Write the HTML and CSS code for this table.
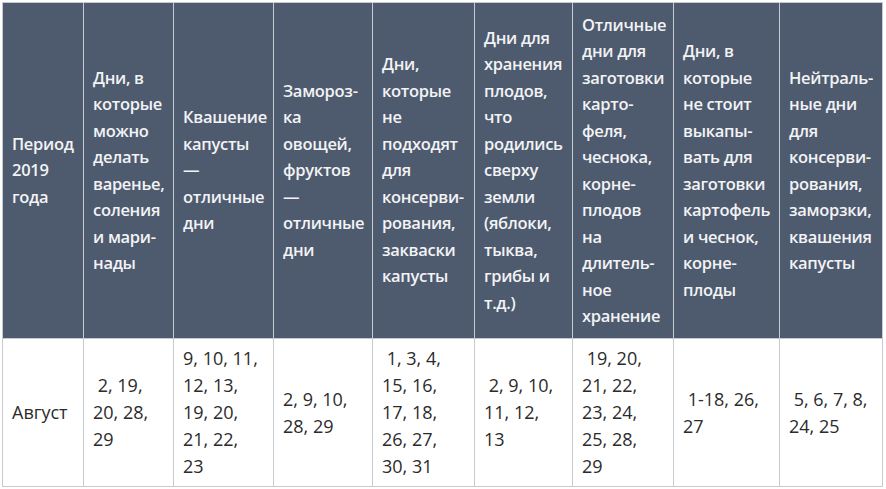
FILE: index.html
```html
<!DOCTYPE html>
<html lang="ru">
<head>
<meta charset="utf-8">
<link rel="stylesheet" href="styles.css">
</head>
<body>
<table class="cal">
  <colgroup>
    <col class="c1"><col class="c2"><col class="c3"><col class="c4"><col class="c5"><col class="c6"><col class="c7"><col class="c8"><col class="c9">
  </colgroup>
  <thead>
    <tr class="head">
      <th>Период<br>2019<br>года</th>
      <th>Дни, в<br>которые<br>можно<br>делать<br>варенье,<br>соления<br>и мари-<br>нады</th>
      <th>Квашение<br>капусты<br>—<br>отличные<br>дни</th>
      <th>Замороз-<br>ка<br>овощей,<br>фруктов<br>—<br>отличные<br>дни</th>
      <th>Дни,<br>которые<br>не<br>подходят<br>для<br>консерви-<br>рования,<br>закваски<br>капусты</th>
      <th>Дни для<br>хранения<br>плодов,<br>что<br>родились<br>сверху<br>земли<br>(яблоки,<br>тыква,<br>грибы и<br>т.д.)</th>
      <th>Отличные<br>дни для<br>заготовки<br>карто-<br>феля,<br>чеснока,<br>корне-<br>плодов<br>на<br>длитель-<br>ное<br>хранение</th>
      <th>Дни, в<br>которые<br>не стоит<br>выкапы-<br>вать для<br>заготовки<br>картофель<br>и чеснок,<br>корне-<br>плоды</th>
      <th>Нейтраль-<br>ные дни<br>для<br>консерви-<br>рования,<br>заморзки,<br>квашения<br>капусты</th>
    </tr>
  </thead>
  <tbody>
    <tr class="row">
      <td>Август</td>
      <td>&nbsp;2, 19,<br>20, 28,<br>29</td>
      <td>9, 10, 11,<br>12, 13,<br>19, 20,<br>21, 22,<br>23</td>
      <td>2, 9, 10,<br>28, 29</td>
      <td>&nbsp;1, 3, 4,<br>15, 16,<br>17, 18,<br>26, 27,<br>30, 31</td>
      <td>&nbsp;2, 9, 10,<br>11, 12,<br>13</td>
      <td>&nbsp;19, 20,<br>21, 22,<br>23, 24,<br>25, 28,<br>29</td>
      <td>&nbsp;1-18, 26,<br>27</td>
      <td>&nbsp;5, 6, 7, 8,<br>24, 25</td>
    </tr>
  </tbody>
</table>
</body>
</html>
```
FILE: styles.css
```css
html, body {
  margin: 0;
  padding: 0;
  background: #ffffff;
}
body {
  padding: 2px;
}
.cal {
  border-collapse: collapse;
  table-layout: fixed;
  width: 881px;
}
.c1 { width: 81px; }
.c2 { width: 90px; }
.c3 { width: 100px; }
.c4 { width: 99px; }
.c5 { width: 102px; }
.c6 { width: 98px; }
.c7 { width: 101px; }
.c8 { width: 106px; }
.c9 { width: 103px; }
.cal th, .cal td {
  border: 1px solid #c6cbd2;
  text-align: left;
  vertical-align: middle;
  padding: 0 2px 0 9px;
  white-space: nowrap;
  overflow: hidden;
}
.head {
  height: 336px;
}
.head th {
  background: #4e5a6e;
  color: #f2f3f5;
  font-family: "Open Sans", "Noto Sans", sans-serif;
  font-weight: 600;
  font-size: 16.5px;
  line-height: 26.5px;
  letter-spacing: -0.3px;
}
.row {
  height: 148px;
}
.row td {
  background: #ffffff;
  color: #2b2b2b;
  font-family: "Open Sans", "Noto Sans", sans-serif;
  font-weight: 400;
  font-size: 18px;
  line-height: 27px;
  letter-spacing: 0;
}
```
